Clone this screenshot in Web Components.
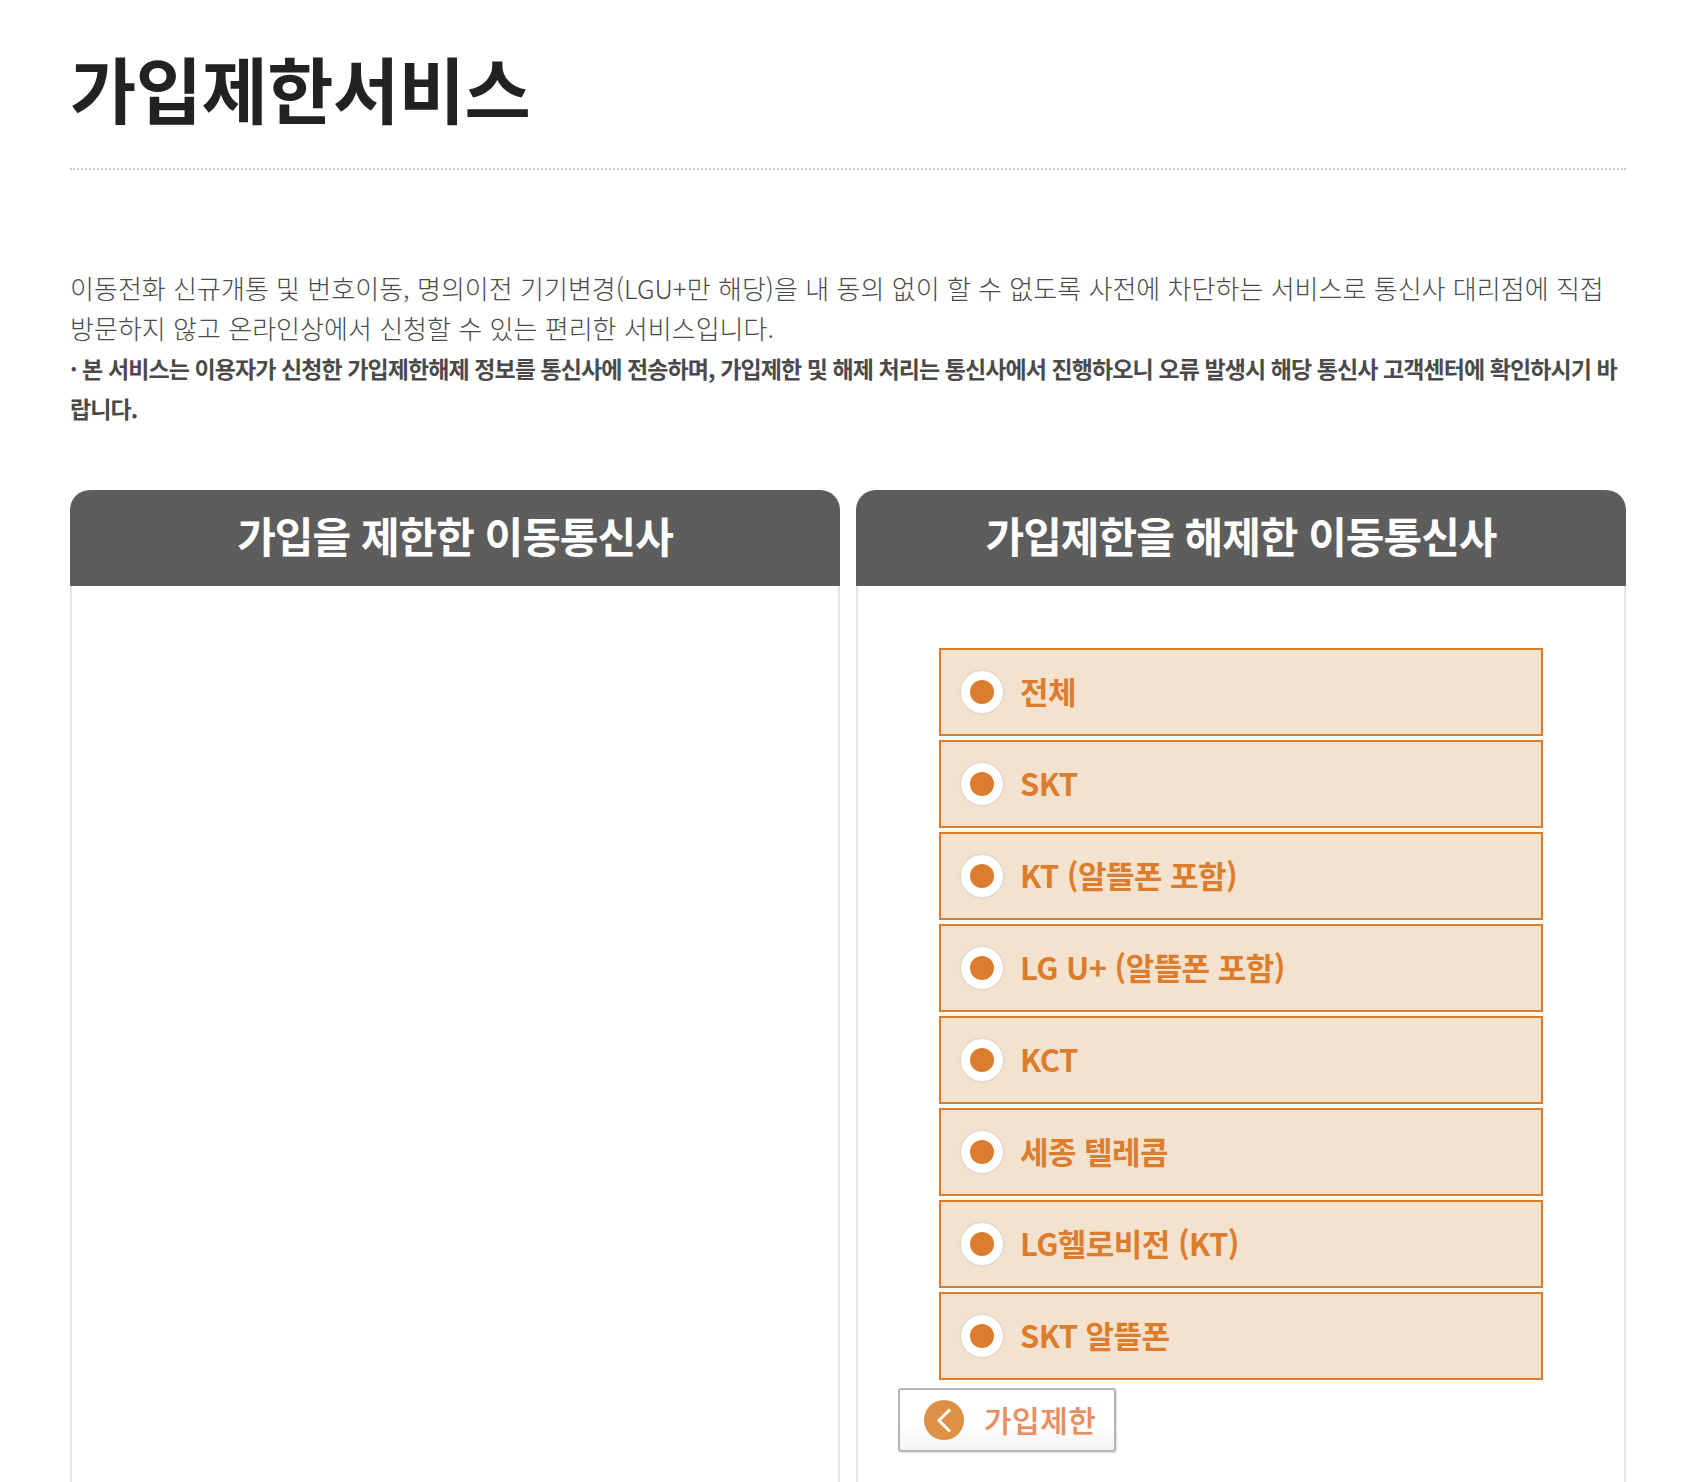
<!DOCTYPE html>
<html lang="ko"><head><meta charset="utf-8">
<style>
html,body{margin:0;padding:0;background:#fff;height:1482px;overflow:hidden}
body{font-family:"Noto Sans CJK KR","Noto Sans",sans-serif}
</style></head><body>
<template id="t-page"><style>
:host{display:block;padding:0 70px;box-sizing:border-box;width:1696px;height:1482px;overflow:hidden}
.cols{display:grid;grid-template-columns:770px 770px;gap:0 16px;margin-top:62px}
</style><slot name="head"></slot><slot name="intro"></slot><div class="cols"><slot></slot></div></template>

<template id="t-title"><style>
:host{display:block;height:170px;box-sizing:border-box;padding-top:37px;border-bottom:2px dotted #ccc}
h1{margin:0;font-size:72px;line-height:100px;font-weight:700;color:#222;letter-spacing:-.5px}
</style><h1><slot></slot></h1></template>

<template id="t-intro"><style>
:host{display:block;margin-top:98px;font-size:26px;line-height:40px;color:#4a4a4a;letter-spacing:.02px;font-weight:300}
.n{display:block;font-size:23px;font-weight:700;color:#4a4a4a;letter-spacing:-.91px}
</style><div><slot></slot></div><span class="n"><slot name="note"></slot></span></template>

<template id="t-panel"><style>
:host{display:block;height:1000px}
h2{margin:0;height:96px;background:#5d5d5d;border-radius:20px 20px 0 0;color:#fff;font-size:42px;font-weight:700;line-height:90px;text-align:center;letter-spacing:-1px}
.b{box-sizing:border-box;height:904px;border:2px solid #e4e4e4;border-top:0;padding:62px 81px 0}
.l{display:flex;flex-direction:column;gap:4px}
.x{margin-left:-41px;margin-top:8px}
</style><h2><slot name="title"></slot></h2><div class="b"><div class="l"><slot></slot></div><div class="x"><slot name="action"></slot></div></div></template>

<template id="t-row"><style>
:host{display:flex;align-items:center;box-sizing:border-box;height:88px;border:2px solid #dc7d2e;background:#f3e2ce;padding-left:20px;color:#dc7d2e;font-size:31px;font-weight:700;letter-spacing:-.55px}
.r{flex:none;box-sizing:border-box;width:42px;height:42px;border-radius:50%;background:#fff;box-shadow:0 0 3px #c4c4c4;display:flex;align-items:center;justify-content:center;margin-right:17px}
.r i{display:block;width:24px;height:24px;border-radius:50%;background:#dc7d2e}
.t{padding-bottom:4px}
</style><span class="r"><i></i></span><span class="t"><slot></slot></span></template>

<template id="t-btn"><style>
:host{display:inline-flex;align-items:center;box-sizing:border-box;width:218px;height:64px;border:2px solid #b4b4b4;border-radius:3px;background:linear-gradient(#fff 55%,#f3f3f3);box-shadow:1px 1px 2px #ddd;padding-left:23px;color:#e88d62;font-size:30px;font-weight:500;letter-spacing:.5px;text-shadow:0 0 1px rgba(232,141,98,.5)}
svg{flex:none;width:42px;height:42px;margin-right:19px}
.t{padding-bottom:2px}
</style><svg viewBox="0 0 42 42"><circle cx="21" cy="21" r="20" fill="#de9145"/><path d="M27 10.5 16 21.5l11 11" fill="none" stroke="#fff" stroke-width="3"/></svg><span class="t"><slot></slot></span></template>

<app-page>
<page-title slot="head">가입제한서비스</page-title>
<intro-text slot="intro">이동전화 신규개통 및 번호이동, 명의이전 기기변경(LGU+만 해당)을 내 동의 없이 할 수 없도록 사전에 차단하는 서비스로 통신사 대리점에 직접 방문하지 않고 온라인상에서 신청할 수 있는 편리한 서비스입니다.<span slot="note">· 본 서비스는 이용자가 신청한 가입제한해제 정보를 통신사에 전송하며, 가입제한 및 해제 처리는 통신사에서 진행하오니 오류 발생시 해당 통신사 고객센터에 확인하시기 바랍니다.</span></intro-text>
<carrier-panel><span slot="title">가입을 제한한 이동통신사</span></carrier-panel>
<carrier-panel><span slot="title">가입제한을 해제한 이동통신사</span>
<carrier-row>전체</carrier-row>
<carrier-row>SKT</carrier-row>
<carrier-row>KT (알뜰폰 포함)</carrier-row>
<carrier-row>LG U+ (알뜰폰 포함)</carrier-row>
<carrier-row>KCT</carrier-row>
<carrier-row>세종 텔레콤</carrier-row>
<carrier-row>LG헬로비전 (KT)</carrier-row>
<carrier-row>SKT 알뜰폰</carrier-row>
<back-button slot="action">가입제한</back-button>
</carrier-panel>
</app-page>
<script>
const reg=(name,id)=>customElements.define(name,class extends HTMLElement{constructor(){super();this.attachShadow({mode:'open'}).appendChild(document.getElementById(id).content.cloneNode(true))}});
reg('app-page','t-page');reg('page-title','t-title');reg('intro-text','t-intro');reg('carrier-panel','t-panel');reg('carrier-row','t-row');reg('back-button','t-btn');
</script>
</body></html>
